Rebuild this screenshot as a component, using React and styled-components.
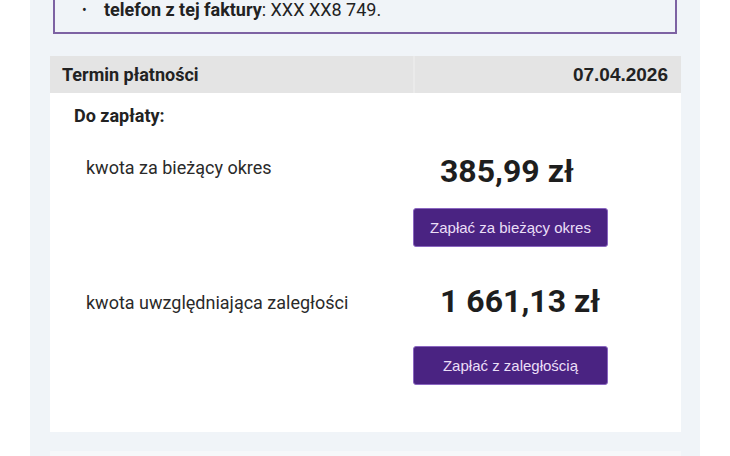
import React from "react";
import styled, { createGlobalStyle } from "styled-components";

const Global = createGlobalStyle`
  html, body { margin: 0; padding: 0; background: #ffffff; }
  body { font-family: Roboto, "Liberation Sans", sans-serif; color: #222222; overflow: hidden; }
`;

const Panel = styled.div`
  display: flow-root;
  margin-left: 30px;
  width: 670px;
  box-sizing: border-box;
  padding: 0 19px 0 20px;
  background: #f0f4f8;
  min-height: 456px;
`;

const InfoBox = styled.div`
  margin: -13px 4px 0 3px;
  border: 2px solid #7d62a3;
  padding: 10px 20px 11px 27px;
`;

const InfoList = styled.ul`
  margin: 0;
  padding: 0;
  list-style: none;
`;

const InfoItem = styled.li`
  display: flex;
  align-items: center;
  font-size: 18px;
  line-height: 22px;
  color: #222;
  &::before {
    content: "•";
    width: 22px;
    font-size: 14px;
  }
  b { font-weight: 700; }
`;

const Header = styled.div`
  margin-top: 22px;
  display: grid;
  grid-template-columns: 363px 1fr;
  height: 37px;
  background: #e4e4e4;
`;

const HeaderCell = styled.div`
  display: flex;
  align-items: center;
  justify-content: ${(p) => (p.$right ? "flex-end" : "flex-start")};
  padding: ${(p) => (p.$right ? "0 13px 0 0" : "0 0 0 12px")};
  font-family: ${(p) => (p.$right ? '"Liberation Sans", Arial, sans-serif' : 'Roboto, "Liberation Sans", sans-serif')};
  font-weight: 700;
  font-size: ${(p) => (p.$right ? "19px" : "18px")};
  color: #222;
  border-left: ${(p) => (p.$right ? "2px solid #eaeaea" : "none")};
`;

const Card = styled.div`
  background: #ffffff;
  padding: 13px 0 47px 0;
`;

const CardTitle = styled.div`
  padding-left: 24px;
  font-weight: 700;
  font-size: 18px;
  line-height: 20px;
  color: #222;
`;

const AmountRow = styled.div`
  display: grid;
  grid-template-columns: 363px 195px;
  margin-top: ${(p) => p.$top}px;
`;

const Label = styled.div`
  padding-left: 36px;
  padding-top: ${(p) => p.$offset}px;
  font-size: 18px;
  line-height: 24px;
  color: #2a2a2a;
`;

const AmountCol = styled.div`
  display: flex;
  flex-direction: column;
  align-items: stretch;
`;

const Amount = styled.div`
  padding-left: 27px;
  font-weight: 700;
  font-size: 32px;
  line-height: 40px;
  color: #1e1e1e;
  white-space: nowrap;
`;

const PayButton = styled.button`
  margin-top: ${(p) => p.$gap}px;
  width: 195px;
  height: 39px;
  border: 1px solid #8a66c0;
  border-radius: 3px;
  background: #4a2382;
  color: #eadff7;
  font-family: "Liberation Sans", Arial, sans-serif;
  font-size: 15px;
  cursor: pointer;
`;

const NextCard = styled.div`
  margin-top: 19px;
  height: 10px;
  background: #f6f8fa;
`;

export default function App() {
  return (
    <>
      <Global />
      <Panel>
        <InfoBox>
          <InfoList>
            <InfoItem>
              <span>
                <b>telefon z tej faktury</b>: XXX XX8 749.
              </span>
            </InfoItem>
          </InfoList>
        </InfoBox>
        <Header>
          <HeaderCell>Termin płatności</HeaderCell>
          <HeaderCell $right>07.04.2026</HeaderCell>
        </Header>
        <Card>
          <CardTitle>Do zapłaty:</CardTitle>
          <AmountRow $top={25}>
            <Label $offset={5}>kwota za bieżący okres</Label>
            <AmountCol>
              <Amount>385,99 zł</Amount>
              <PayButton $gap={17}>Zapłać za bieżący okres</PayButton>
            </AmountCol>
          </AmountRow>
          <AmountRow $top={34}>
            <Label $offset={10}>kwota uwzględniająca zaległości</Label>
            <AmountCol>
              <Amount>1 661,13 zł</Amount>
              <PayButton $gap={25}>Zapłać z zaległością</PayButton>
            </AmountCol>
          </AmountRow>
        </Card>
        <NextCard />
      </Panel>
    </>
  );
}
